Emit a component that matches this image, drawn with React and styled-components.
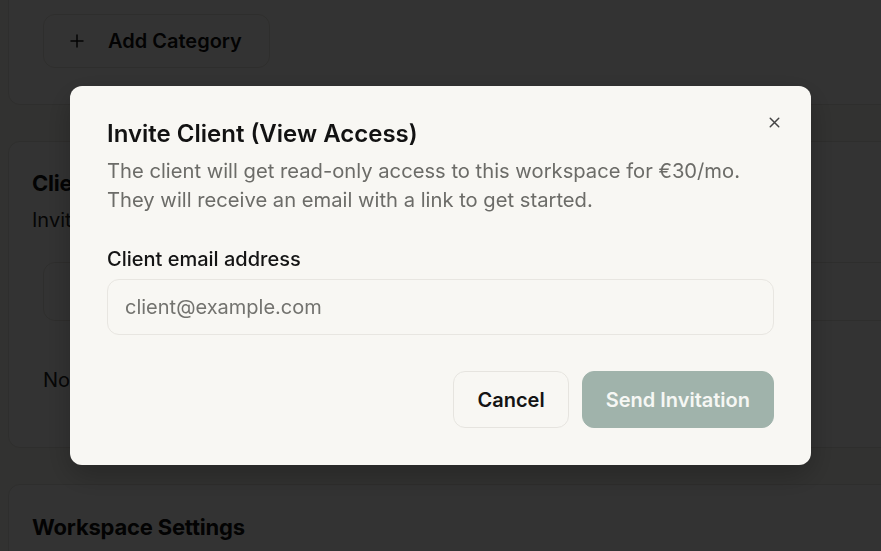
import React from 'react';
import styled, { createGlobalStyle } from 'styled-components';

const GlobalStyle = createGlobalStyle`
  html, body {
    margin: 0;
    padding: 0;
    background: #f8f7f3;
    font-family: Inter, "Noto Sans", "Liberation Sans", sans-serif;
    overflow: hidden;
  }
`;

const Page = styled.div`
  display: flex;
  flex-direction: column;
  gap: 36px;
  padding: 0 0 0 8px;
  width: 920px;
  margin-top: -20px;
`;

const Card = styled.section`
  background: #ffffff;
  border: 1px solid #e6e4de;
  border-radius: 12px;
  padding: ${({ $pad }) => $pad || '24px'};
  color: #111;
`;

const CardTitle = styled.h2`
  margin: 0;
  font-size: 22px;
  font-weight: 700;
  line-height: 28px;
  letter-spacing: -0.2px;
`;

const CardText = styled.p`
  margin: ${({ $m }) => $m || '10px 0 0'};
  font-size: 20px;
  line-height: 26px;
  color: #222;
`;

const GhostButton = styled.button`
  display: flex;
  align-items: center;
  gap: 22px;
  height: 54px;
  padding: 0 27px 0 24px;
  border: 1px solid #e6e4de;
  border-radius: 12px;
  background: #fff;
  font: 600 20px Inter, sans-serif;
  color: #111;
`;

const FakeField = styled.div`
  margin: 29px 0 0 11px;
  height: 57px;
  border: 1px solid #e6e4de;
  border-radius: 12px;
`;

const Overlay = styled.div`
  position: fixed;
  inset: 0;
  background: rgba(0, 0, 0, 0.8);
  display: flex;
  align-items: center;
  justify-content: center;
`;

const Dialog = styled.div`
  position: relative;
  box-sizing: border-box;
  width: 741px;
  padding: 37px;
  background: #f8f7f3;
  border-radius: 12px;
  box-shadow: 0 10px 30px rgba(0, 0, 0, 0.25);
`;

const Title = styled.h2`
  margin: 0;
  font-size: 24px;
  font-weight: 600;
  line-height: 22px;
  color: #121212;
`;

const Description = styled.p`
  margin: 11px 0 0;
  font-size: 20.2px;
  line-height: 29px;
  color: #6c6c68;
`;

const Label = styled.label`
  display: block;
  margin-top: 32px;
  font-size: 20px;
  font-weight: 500;
  line-height: 27px;
  color: #141414;
`;

const Input = styled.input`
  display: block;
  box-sizing: border-box;
  width: 100%;
  height: 56px;
  margin-top: 6px;
  padding: 0 17px;
  border: 1px solid #e8e6e1;
  border-radius: 12px;
  background: #f8f7f3;
  font: 400 20px Inter, sans-serif;
  color: #111;
  outline: none;

  &::placeholder {
    color: #73736f;
  }
`;

const Actions = styled.div`
  display: flex;
  justify-content: flex-end;
  gap: 13px;
  margin-top: 36px;
`;

const Button = styled.button`
  height: 57px;
  padding: 0 23px;
  border-radius: 12px;
  font: 600 20px Inter, sans-serif;
  border: 1px solid ${({ $primary }) => ($primary ? '#a0b3ab' : '#e6e4df')};
  background: ${({ $primary }) => ($primary ? '#a0b3ab' : '#f8f7f3')};
  color: ${({ $primary }) => ($primary ? '#f6f7f4' : '#141414')};
`;

const CloseButton = styled.button`
  position: absolute;
  top: 26px;
  right: 27px;
  width: 20px;
  height: 20px;
  padding: 0;
  border: 0;
  background: transparent;
  color: #444;
  display: flex;
  align-items: center;
  justify-content: center;
`;

const Plus = () => (
  <svg width="18" height="18" viewBox="0 0 24 24" fill="none" stroke="currentColor" strokeWidth="2" strokeLinecap="round">
    <path d="M12 4v16M4 12h16" />
  </svg>
);

const Close = () => (
  <svg width="17" height="17" viewBox="0 0 24 24" fill="none" stroke="currentColor" strokeWidth="2.1" strokeLinecap="round">
    <path d="M18 6 6 18M6 6l12 12" />
  </svg>
);

export default function App() {
  return (
    <>
      <GlobalStyle />
      <Page>
        <Card $pad="33px 24px 36px 34px">
          <GhostButton>
            <Plus />
            Add Category
          </GhostButton>
        </Card>
        <Card $pad="27px 24px 24px 23px">
          <CardTitle>Client Access</CardTitle>
          <CardText>Invite clients to view this workspace.</CardText>
          <FakeField />
          <CardText $m="46px 0 30px 11px">No clients invited yet.</CardText>
        </Card>
        <Card $pad="28px 24px 24px 23px">
          <CardTitle>Workspace Settings</CardTitle>
        </Card>
      </Page>
      <Overlay>
        <Dialog role="dialog">
          <CloseButton aria-label="Close">
            <Close />
          </CloseButton>
          <Title>Invite Client (View Access)</Title>
          <Description>
            The client will get read-only access to this workspace for €30/mo.
            <br />
            They will receive an email with a link to get started.
          </Description>
          <Label htmlFor="client-email">Client email address</Label>
          <Input id="client-email" type="email" placeholder="client@example.com" />
          <Actions>
            <Button>Cancel</Button>
            <Button $primary>Send Invitation</Button>
          </Actions>
        </Dialog>
      </Overlay>
    </>
  );
}
